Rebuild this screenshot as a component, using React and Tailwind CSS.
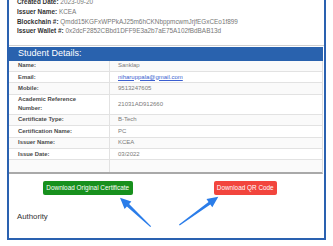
import React from 'react';

const rows = [
  { label: 'Name:', value: 'Sanklap' },
  { label: 'Email:', value: 'niharuppala@gmail.com', link: true },
  { label: 'Mobile:', value: '9513247605' },
  { label: ['Academic Reference', 'Number:'], value: '21031AD912660', tall: true },
  { label: 'Certificate Type:', value: 'B-Tech' },
  { label: 'Certification Name:', value: 'PC' },
  { label: 'Issuer Name:', value: 'KCEA' },
  { label: 'Issue Date:', value: '03/2022' },
  { label: '', value: '' },
];

const Arrows = () => (
  <svg className="absolute inset-0 pointer-events-none" width="315" height="64" viewBox="0 0 315 64">
    {/* left arrow pointing at the green button */}
    <polygon
      fill="#2b7de9"
      points="111,23.7 122.4,27.6 120.1,30.1 142.1,52.3 141.3,53.1 117.9,32.4 115.6,34.9"
    />
    {/* right arrow pointing at the red button */}
    <polygon
      fill="#2b7de9"
      points="209.3,22.7 197.5,25.1 199.5,27.9 170,50.5 170.7,51.5 201.3,30.5 203.3,33.2"
    />
  </svg>
);

const App = () => {
  return (
    <div className="w-[333px] h-[246px] bg-white overflow-hidden font-['Liberation_Sans',Arial,sans-serif]">
      <div className="ml-[7px] w-[319px] -mt-[3px] border-x-2 border-b-2 border-[#2a61b0]">
        {/* top block */}
        <div className="pl-[8px] pb-[9px] text-[6.4px] leading-[9.8px] border-b border-[#cfcfcf]">
          <div><span className="font-bold text-[#333]">Created Date:</span> <span className="text-[#777]">2023-09-20</span></div>
          <div><span className="font-bold text-[#333]">Issuer Name:</span> <span className="text-[#777]">KCEA</span></div>
          <div><span className="font-bold text-[#333]">Blockchain #:</span> <span className="text-[#777]">Qmdd15KGFxWPPkAJ25m6hCKNbppmcwmJrjfEGxCEo1f899</span></div>
          <div><span className="font-bold text-[#333]">Issuer Wallet #:</span> <span className="text-[#777]">0x2dcF2852CBbd1DFF9E3a2b7aE75A102fBdBAB13d</span></div>
        </div>

        {/* student details header */}
        <div className="mt-[1px] mr-[1px] h-[13.4px] bg-[#2962ae] pl-[9px] flex items-center">
          <span className="text-white text-[9px] leading-none">Student Details:</span>
        </div>

        {/* details table */}
        <div className="mr-[1px] border-r border-[#dedede] border-b-2 border-b-[#a9a9a9]">
          {rows.map((r, i) => (
            <div
              key={i}
              className={`flex border-b border-[#e2e2e2] last:border-b-0 ${r.tall ? 'h-[20px]' : 'h-[11.4px]'} ${i % 2 === 0 ? 'bg-[#fafafa]' : 'bg-white'}`}
            >
              <div className="w-[101px] shrink-0 border-r border-[#e2e2e2] pl-[9px] flex flex-col justify-center text-[5.9px] leading-[9px] font-semibold text-[#4a4a4a]">
                {Array.isArray(r.label) ? r.label.map((l) => <div key={l}>{l}</div>) : r.label}
              </div>
              <div className="pl-[8px] flex items-center text-[6px] text-[#7a7a7a]">
                {r.link ? <span className="text-[#3b5fd0] underline">{r.value}</span> : r.value}
              </div>
            </div>
          ))}
        </div>

        {/* downloads */}
        <div className="relative h-[64px]">
          <div className="grid grid-cols-2 pt-[7px]">
            <div className="flex justify-center">
              <button className="h-[14px] w-[90px] rounded-[2px] bg-[#17901d] text-white text-[6.4px] leading-none">
                Download Original Certificate
              </button>
            </div>
            <div className="flex justify-center">
              <button className="h-[14px] w-[63px] rounded-[2px] bg-[#f2453d] text-white text-[6.4px] leading-none">
                Download QR Code
              </button>
            </div>
          </div>
          <div className="pl-[8px] mt-[17px] text-[7.8px] leading-[10px] text-[#333]">Authority</div>
          <Arrows />
        </div>
      </div>
    </div>
  );
};

export default App;
